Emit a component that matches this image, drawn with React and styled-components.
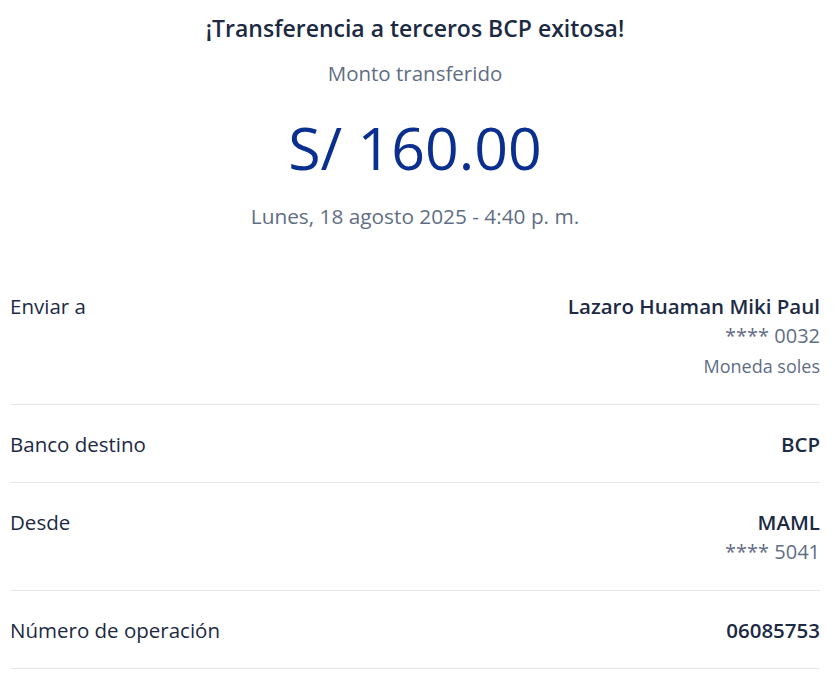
import styled, { createGlobalStyle } from "styled-components";

const GlobalStyle = createGlobalStyle`
    body {
        margin: 0;
        background: #ffffff;
        font-family: "Open Sans", "Liberation Sans", sans-serif;
    }
`;

const rows = [
    {
        label: "Enviar a",
        lines: [
            { text: "Lazaro Huaman Miki Paul", kind: "main" },
            { text: "**** 0032", kind: "sub" },
            { text: "Moneda soles", kind: "note" },
        ],
    },
    { label: "Banco destino", lines: [{ text: "BCP", kind: "main" }] },
    {
        label: "Desde",
        lines: [
            { text: "MAML", kind: "main" },
            { text: "**** 5041", kind: "sub" },
        ],
    },
    { label: "Número de operación", lines: [{ text: "06085753", kind: "main" }] },
];

const App = () => {
    return (
        <Page>
            <GlobalStyle />
            <Header>
                <Title>¡Transferencia a terceros BCP exitosa!</Title>
                <Caption>Monto transferido</Caption>
                <Amount>S/ 160.00</Amount>
                <DateText>Lunes, 18 agosto 2025 - 4:40 p. m.</DateText>
            </Header>
            <Details>
                {rows.map((row) => (
                    <Row key={row.label}>
                        <Label>{row.label}</Label>
                        <Values>
                            {row.lines.map((line) => (
                                <Value key={line.text} kind={line.kind}>
                                    {line.text}
                                </Value>
                            ))}
                        </Values>
                    </Row>
                ))}
            </Details>
        </Page>
    );
};

const Page = styled.div`
    width: 810px;
    padding: 14px 18px 0 10px;
    color: #1c2a44;
`;

const Header = styled.div`
    display: flex;
    flex-direction: column;
    align-items: center;
`;

const Title = styled.h1`
    margin: 0;
    font-size: 23px;
    line-height: 28px;
    font-weight: 600;
    color: #1c2a44;
`;

const Caption = styled.div`
    margin-top: 19px;
    font-size: 20.5px;
    line-height: 24px;
    color: #5f6e84;
`;

const Amount = styled.div`
    margin-top: 24px;
    font-size: 59px;
    line-height: 76px;
    color: #0a2f8f;
`;

const DateText = styled.div`
    margin-top: 19px;
    font-size: 20.8px;
    line-height: 24px;
    color: #5f6e84;
`;

const Details = styled.div`
    margin-top: 39px;
    display: flex;
    flex-direction: column;
`;

const Row = styled.div`
    display: flex;
    justify-content: space-between;
    align-items: flex-start;
    padding: 24px 0 23px;
    border-bottom: 1px solid #e4e6ea;
`;

const Label = styled.div`
    font-size: 20.5px;
    line-height: 30px;
    color: #1c2a44;
`;

const Values = styled.div`
    display: flex;
    flex-direction: column;
    align-items: flex-end;
`;

const Value = styled.div`
    line-height: 30px;
    font-size: ${(p) => (p.kind === "note" ? "18px" : p.kind === "sub" ? "20px" : "20.5px")};
    font-weight: ${(p) => (p.kind === "main" ? 600 : 400)};
    color: ${(p) => (p.kind === "main" ? "#1c2a44" : "#5f6e84")};
`;

export default App;
